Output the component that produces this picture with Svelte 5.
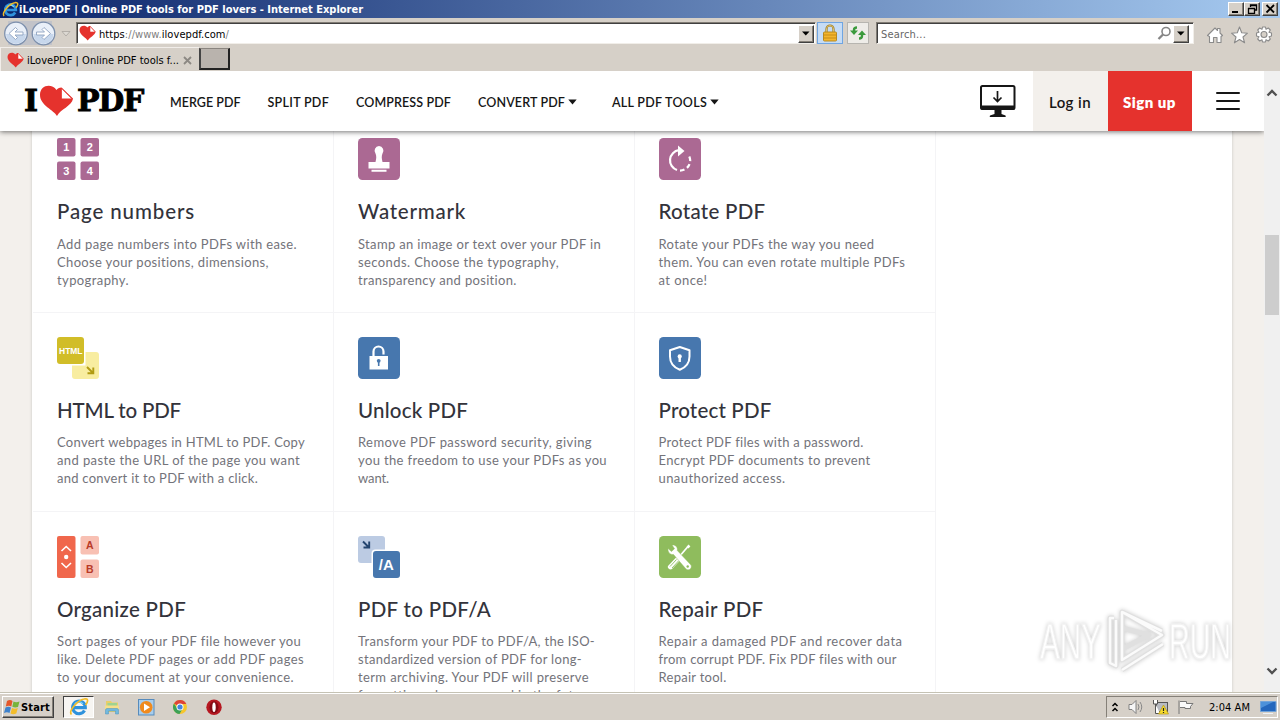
<script>
  // Tracks a run of text out to a set measure.
  function fit(node, width) {
    const natural = node.getBoundingClientRect().width;
    node.style.letterSpacing = (width - natural) / Math.max(1, node.textContent.length) + 'px';
  }

  const nav = [
    { label: 'MERGE PDF', w: 70.5 },
    { label: 'SPLIT PDF', w: 61.5 },
    { label: 'COMPRESS PDF', w: 95 },
    { label: 'CONVERT PDF', w: 87, menu: true },
    { label: 'ALL PDF TOOLS', w: 95, menu: true }
  ];

  const tools = [
    { icon: 'numbers', title: ['Page numbers', 138], lines: [['Add page numbers into PDFs with ease.', 240], ['Choose your positions, dimensions,', 212], ['typography.', 72]] },
    { icon: 'stamp', title: ['Watermark', 108], lines: [['Stamp an image or text over your PDF in', 243], ['seconds. Choose the typography,', 201], ['transparency and position.', 159]] },
    { icon: 'rotate', title: ['Rotate PDF', 107], lines: [['Rotate your PDFs the way you need', 216], ['them. You can even rotate multiple PDFs', 247], ['at once!', 49]] },
    { icon: 'html', title: ['HTML to PDF', 124], lines: [['Convert webpages in HTML to PDF. Copy', 248], ['and paste the URL of the page you want', 243], ['and convert it to PDF with a click.', 201]] },
    { icon: 'unlock', title: ['Unlock PDF', 110], lines: [['Remove PDF password security, giving', 234], ['you the freedom to use your PDFs as you', 249], ['want.', 31]] },
    { icon: 'protect', title: ['Protect PDF', 113], lines: [['Protect PDF files with a password.', 205], ['Encrypt PDF documents to prevent', 212], ['unauthorized access.', 127]] },
    { icon: 'organize', title: ['Organize PDF', 129], lines: [['Sort pages of your PDF file however you', 244], ['like. Delete PDF pages or add PDF pages', 247], ['to your document at your convenience.', 237]] },
    { icon: 'pdfa', title: ['PDF to PDF/A', 133], lines: [['Transform your PDF to PDF/A, the ISO-', 237], ['standardized version of PDF for long-', 224], ['term archiving. Your PDF will preserve', 231], ['formatting when accessed in the future.', 238]] },
    { icon: 'repair', title: ['Repair PDF', 105], lines: [['Repair a damaged PDF and recover data', 244], ['from corrupt PDF. Fix PDF files with our', 238], ['Repair tool.', 68]] }
  ];
</script>

{#snippet heart(w)}
  <svg width={w} height={w} viewBox="0 0 34 34">
    <path d="M17.500 31C14 25 1 20 1 10C1 1 12 -1 17 5C18 3 20 2 22 2L33 13C33 20 21 25 17.500 31Z" fill="#e5322d" />
    <path d="M22 2.500V14H32.500Z" fill="#fff" stroke="#e5322d" stroke-width="1.200" stroke-linejoin="round" />
  </svg>
{/snippet}

{#snippet ie(w)}
  <svg width={w} height={w} viewBox="0 0 20 20">
    <path d="M15.500 13.500A6.300 6.300 0 1 1 16.300 10.600H4.500" fill="none" stroke="#2f92dc" stroke-width="3.200" />
    <path d="M5.500 7.500A5 5 0 0 1 14 7" fill="none" stroke="#79d0f8" stroke-width="1.300" />
    <path d="M2.500 17.500C-1 14 9 3 15 2C20 1 19 5 16.500 8" fill="none" stroke="#f2bc28" stroke-width="1.700" />
  </svg>
{/snippet}

{#snippet caret()}
  <svg width="8" height="5" viewBox="0 0 8 5"><path d="M0 0.500H7.500L3.750 4.500Z" fill="#000" /></svg>
{/snippet}

<div class="screen">
  <div class="titlebar">
    {@render ie(17)}
    <span class="title-text"><span use:fit={344}>iLovePDF | Online PDF tools for PDF lovers - Internet Explorer</span></span>
    <div class="winbtns">
      <div class="btn3d"><svg width="11" height="10"><path d="M1 8H7" stroke="#000" stroke-width="2" /></svg></div>
      <div class="btn3d"><svg width="11" height="10"><path d="M3.500 3V1H9.500V6H7.500M3 1.500H10M1.500 4V9.500H7.500V4M1 4.500H8" fill="none" stroke="#000" stroke-width="1.300" /></svg></div>
      <div class="btn3d last"><svg width="11" height="10"><path d="M1.500 1L9 8.500M9 1L1.500 8.500" stroke="#000" stroke-width="1.800" /></svg></div>
    </div>
  </div>

  <div class="addressbar">
    <svg class="navbtns" width="74" height="29" viewBox="0 0 74 29">
      <path d="M8 3H52V27H8Z" fill="#c2c3c9" />
      <g stroke="#7d90ad" stroke-width="1.300" fill="#e9eff8"><circle cx="16" cy="15.500" r="11.300" /><circle cx="43.500" cy="15.500" r="11.300" /></g>
      <path d="M6 16a10 10 0 0 0 20 0zM33.500 16a10 10 0 0 0 20 0z" fill="#c7d7ec" />
      <g fill="#fff" stroke="#8ea3c1" stroke-width="0.900">
        <path d="M9 15.500L15.500 9.500L17.500 11.500L15 14H23V17H15L17.500 19.500L15.500 21.500Z" />
        <path d="M50.500 15.500L44 9.500L42 11.500L44.500 14H36.500V17H44.500L42 19.500L44 21.500Z" />
      </g>
      <path d="M62 13.500H70L66 18Z" fill="#ddd9d3" stroke="#aaa59f" stroke-width="0.800" />
    </svg>
    <div class="field url">
      {@render heart(17)}
      <span class="url-text"><span use:fit={130}>https<i>://www.</i>ilovepdf.com<i>/</i></span></span>
      <div class="btn3d drop">{@render caret()}</div>
    </div>
    <div class="lock">
      <svg width="14" height="18" viewBox="0 0 14 18">
        <path d="M3.500 9V5a3.500 3.500 0 0 1 7 0V9" fill="none" stroke="#9a7b27" stroke-width="2.200" />
        <path d="M3.500 9V5a3.500 3.500 0 0 1 7 0V9" fill="none" stroke="#efd27a" stroke-width="0.800" />
        <rect x="0.500" y="8" width="13" height="9" rx="1" fill="#f3b52d" stroke="#b88a20" /><path d="M1 11H13M1 14H13" stroke="#c78d18" />
      </svg>
    </div>
    <div class="refresh">
      <svg width="16" height="14" viewBox="0 0 16 14" fill="none" stroke="#3b9a3c" stroke-width="2.400">
        <path d="M7 1.500Q4 1.500 4 4V6" /><path d="M0 4.500H8L4 9Z" fill="#3b9a3c" stroke="none" />
        <path d="M9 12.500Q12 12.500 12 10V8" /><path d="M8 9H16L12 4.500Z" fill="#3b9a3c" stroke="none" />
      </svg>
    </div>
    <div class="field search">
      <span class="ph"><span use:fit={45}>Search...</span></span>
      <svg width="15" height="15" viewBox="0 0 15 15" fill="none" stroke="#858585"><circle cx="9" cy="5.500" r="4" stroke-width="1.600" /><path d="M6 8.500L1.500 13" stroke-width="2.300" /></svg>
      <div class="btn3d drop">{@render caret()}</div>
    </div>
    <svg class="tooltrio" width="68" height="20" viewBox="0 0 68 20" fill="#fff" stroke="#8b8b8b" stroke-width="1.100" stroke-linejoin="round">
      <path d="M1.500 10.500L9 3L11.500 5.500V3.500H14V8L16.500 10.500L15 11.500V17.500H11V12.500H7.500V17.500H3.500V11.500Z" />
      <path d="M33.500 2L35.700 7.800L41.500 8.200L37 12L38.600 17.800L33.500 14.500L28.400 17.800L30 12L25.500 8.200L31.300 7.800Z" />
      <path d="M56.500 2H59.500L60 4.300L62.300 3L64.300 5L63 7.300L65.500 8V11L63 11.700L64.300 14L62.300 16L60 14.700L59.500 17H56.500L56 14.700L53.700 16L51.700 14L53 11.700L50.500 11V8L53 7.300L51.700 5L53.700 3L56 4.300Z" />
      <circle cx="58" cy="9.500" r="3" fill="#d6d0c8" />
    </svg>
  </div>

  <div class="tabs">
    <div class="tab">
      {@render heart(17)}
      <span class="tab-text"><span use:fit={152}>iLovePDF | Online PDF tools f...</span></span>
      <svg width="9" height="9" viewBox="0 0 9 9"><path d="M1 1L8 8M8 1L1 8" stroke="#8c8883" stroke-width="1.800" /></svg>
    </div>
    <div class="newtab"></div>
  </div>

  <div class="viewport">
    <div class="page">
      <header>
        <div class="logo">
          <span class="slab i"><span use:fit={12}>I</span></span>
          <svg width="35" height="32" viewBox="0 0 35 32">
            <path d="M18 31C15 25 1 20.500 1 10C1 0 12.500 -2 17.500 5C18.500 3.500 20 2.500 22.500 2.500L34 13.500C33 21 21 24.500 18 31Z" fill="#e5322d" />
            <path d="M22.300 3V14H33.300Z" fill="#fff" stroke="#e5322d" stroke-linejoin="round" />
          </svg>
          <span class="slab pdf"><span use:fit={66}>PDF</span></span>
        </div>
        <nav>
          {#each nav as item}
            <a class:menu={item.menu}><span class="nl" style:width="{item.w}px"><span use:fit={item.w}>{item.label}</span></span>{#if item.menu}<svg width="9" height="6" viewBox="0 0 9 6"><path d="M0.300 0.500H8.700L4.500 5.500Z" fill="#161616" /></svg>{/if}</a>
          {/each}
        </nav>
        <svg class="monitor" width="36" height="33" viewBox="0 0 36 33">
          <rect x="1" y="1" width="33.500" height="23" rx="1.500" fill="#fff" stroke="#161616" stroke-width="2" />
          <path d="M0.500 20.500H35V23Q35 25 33 25H2.500Q0.500 25 0.500 23ZM14.500 25H21.500V29L25.500 30.500Q26.500 32 25 32H10.500Q9 32 10 30.500L14.500 29Z" fill="#161616" />
          <path d="M17.500 6V16M13.500 12.500L17.500 16.500L21.500 12.500" fill="none" stroke="#161616" stroke-width="1.700" />
        </svg>
        <div class="login"><span use:fit={42}>Log in</span></div>
        <div class="signup"><span use:fit={53}>Sign up</span></div>
        <div class="burger"><b></b><b></b><b></b></div>
      </header>

      <main>
        <div class="grid">
          {#each tools as t}
            <article>
              <svg class="icon" width="42" height="42" viewBox="0 0 42 42">
                {#if t.icon === 'numbers'}
                  {#each [[0, 0, '1'], [23.5, 0, '2'], [0, 23.5, '3'], [23.5, 23.5, '4']] as [x, y, n]}
                    <rect {x} {y} width="18.500" height="18.500" rx="2" fill="#ab6993" />
                    <text x={x + 9.2} y={y + 13} class="g" font-size="11">{n}</text>
                  {/each}
                {:else if t.icon === 'stamp'}
                  <rect width="42" height="42" rx="4.500" fill="#ab6993" />
                  <path d="M21 8A4.700 4.700 0 0 1 24.500 15.500Q23 18.500 24.500 24H31.500V30.500H10.500V24H17.500Q19 18.500 17.500 15.500A4.700 4.700 0 0 1 21 8ZM13.500 31.700H28.500V33.700H13.500Z" fill="#fff" />
                {:else if t.icon === 'rotate'}
                  <rect width="42" height="42" rx="4.500" fill="#ab6993" />
                  <g fill="none" stroke="#fff" stroke-width="2.200"><path d="M18 32A10.200 10.200 0 0 1 20 12.200" /><path d="M21 32.600A10.200 10.200 0 0 0 31.200 22.400A10.200 10.200 0 0 0 29 16.500" stroke-dasharray="4.600 3" /></g>
                  <path d="M19 7.500L25.500 13L19 18.500Z" fill="#fff" />
                {:else if t.icon === 'html'}
                  <rect x="15" y="15" width="27" height="27" rx="3" fill="#f8eda0" />
                  <path d="M0 0H28.500V28.500H15V15" fill="#fff" /><rect width="27" height="27" rx="3" fill="#d1bd28" />
                  <text x="13.800" y="16.500" class="g" font-size="8.500" textLength="23.500" lengthAdjust="spacingAndGlyphs">HTML</text>
                  <path d="M30 30L36 36M36.300 30.500V36.300H30.500" stroke="#b19b12" stroke-width="1.900" fill="none" />
                {:else if t.icon === 'unlock'}
                  <rect width="42" height="42" rx="4.500" fill="#4777ae" />
                  <path d="M15.500 20V14.500a5 5 0 0 1 10 0V17.500" fill="none" stroke="#fff" stroke-width="2.200" />
                  <rect x="11.500" y="19" width="18.500" height="13.500" fill="#fff" /><circle cx="20.700" cy="23.800" r="1.900" fill="#4777ae" /><path d="M20.700 24V29" stroke="#4777ae" stroke-width="1.600" />
                {:else if t.icon === 'protect'}
                  <rect width="42" height="42" rx="4.500" fill="#4777ae" />
                  <path d="M20.800 10L30.500 13.300V19.500C30.500 27 26.500 30.500 20.800 32.800C15 30.500 11 27 11 19.500V13.300Z" fill="none" stroke="#fff" stroke-width="2" stroke-linejoin="round" />
                  <circle cx="20.700" cy="19.400" r="2.100" fill="#fff" /><path d="M20.700 19V25" stroke="#fff" stroke-width="2.400" />
                {:else if t.icon === 'organize'}
                  <rect width="18.500" height="42" rx="2" fill="#f0674c" /><rect x="23.500" width="18.500" height="18.500" rx="2" fill="#f8c0b3" /><rect x="23.500" y="23.500" width="18.500" height="18.500" rx="2" fill="#f8c0b3" />
                  <path d="M4.500 15L9.200 10.500L14 15M4.500 27L9.200 31.500L14 27" fill="none" stroke="#fff" stroke-width="1.600" /><circle cx="9.200" cy="21" r="2.200" fill="#fff" />
                  <text x="32.800" y="13.200" class="g" font-size="10.500" fill="#b93a28">A</text><text x="32.800" y="36.500" class="g" font-size="10.500" fill="#b93a28">B</text>
                {:else if t.icon === 'pdfa'}
                  <rect width="27" height="27" rx="3" fill="#bccbe3" /><rect x="13.500" y="13.500" width="30" height="30" rx="4" fill="#fff" /><rect x="15" y="15" width="27" height="27" rx="3" fill="#4777ae" />
                  <path d="M5 5.500L11 11.500M11.200 5.500V11.500H5.500" stroke="#24456f" stroke-width="1.900" fill="none" />
                  <text x="28.300" y="34" class="g" font-size="15">/A</text>
                {:else}
                  <rect width="42" height="42" rx="4.500" fill="#8fbc5d" />
                  <path d="M29 10.500L20 21" stroke="#fff" stroke-width="1.700" /><path d="M28.500 11.500L30.500 9.500" stroke="#fff" stroke-width="2.500" />
                  <path d="M18.500 20L9 30C8 32 11 34.500 13 33L22 23.500Z" fill="#fff" /><path d="M17.500 23.500L11 30.500M19.500 25L13 32" stroke="#8fbc5d" stroke-width="0.900" />
                  <path d="M13 9C16.500 8.500 19 11.500 18.300 14.500L32 29C33.500 32 30 35.500 27 33L14.500 18.500C11 19 8.500 16 9 12.500L12.500 15.500L15.500 12.700Z" fill="#fff" stroke="#8fbc5d" stroke-width="0.500" /><circle cx="28.700" cy="30.500" r="1.200" fill="#8fbc5d" />
                {/if}
              </svg>
              <h3><span use:fit={t.title[1]}>{t.title[0]}</span></h3>
              <p>{#each t.lines as [text, w]}<span class="ln"><span use:fit={w}>{text}</span></span>{/each}</p>
            </article>
          {/each}
        </div>
      </main>

      <svg class="wm" width="200" height="76" viewBox="0 0 200 76">
        <g class="wmt" font-size="50">
          <text x="4" y="53" textLength="61" lengthAdjust="spacingAndGlyphs">ANY</text>
          <text x="133" y="53" textLength="62" lengthAdjust="spacingAndGlyphs">RUN</text>
        </g>
        <g class="wms" fill="none" stroke-linejoin="round">
          <path d="M86 6V54L126 29ZM86 6L126 25M78 12H74V57L80 60V14M86 22V43L113 29ZM86 64L127 38" stroke="#e0e0e0" stroke-width="5" />
          <path d="M86 6V54L126 29ZM86 6L126 25M78 12H74V57L80 60V14M86 64L127 38" stroke="#fbfbfb" stroke-width="2.500" />
        </g>
      </svg>
    </div>
    <div class="scroll">
      <svg width="12" height="8" viewBox="0 0 12 8"><path d="M1.500 6.500L6 2L10.500 6.500" fill="none" stroke="#505050" stroke-width="2.300" /></svg>
      <div class="thumb"></div>
      <svg class="down" width="12" height="8" viewBox="0 0 12 8"><path d="M1.500 1.500L6 6L10.500 1.500" fill="none" stroke="#505050" stroke-width="2.300" /></svg>
    </div>
  </div>

  <div class="taskbar">
    <div class="start">
      <svg width="17" height="17" viewBox="0 0 17 17">
        <path d="M3 2Q6 0 8.500 2L7.300 7.500Q5 6 1.800 7.500Z" fill="#e4572a" /><path d="M9.500 2.500Q12 4 15.500 2.500L14 8Q11 9 8.300 7.700Z" fill="#77b43a" />
        <path d="M1.500 8.500Q4.500 7 7 8.500L5.500 14Q3 12.500 0 14Z" fill="#3e82cc" /><path d="M8 9Q11 10.500 13.800 9L12.300 14.500Q9 16 6.500 14.500Z" fill="#f3bd2a" />
      </svg>
      <span use:fit={29}>Start</span>
    </div>
    <div class="task active">{@render ie(20)}</div>
    <div class="apps">
      <svg width="17" height="17" viewBox="0 0 17 17"><path d="M2 2H7L8 3.500H14V13H2Z" fill="#e8cf68" /><path d="M3.500 4H13V7H3.500Z" fill="#9ed391" /><path d="M1 6.500H15V11H1Z" fill="#f5df8c" /><path d="M1.500 15V11Q1.500 9.500 3 9.500H13Q14.500 9.500 14.500 11V15H11.500V12H4.500V15Z" fill="#72b9df" stroke="#4b92bd" stroke-width="0.500" /></svg>
      <svg width="17" height="17" viewBox="0 0 17 17"><rect x="0.500" y="0.500" width="15.500" height="15.500" fill="#a8cdec" stroke="#578bbc" /><circle cx="8.200" cy="8.200" r="6.300" fill="#f08a1d" /><path d="M6 4.500L12 8.200L6 12Z" fill="#fff" /></svg>
      <svg width="17" height="17" viewBox="0 0 17 17"><circle cx="8" cy="8" r="7" fill="#f6c62c" /><path d="M8 8L2 4.500A7 7 0 0 1 14.300 5H8Z" fill="#dd4438" /><path d="M1.900 4.500A7 7 0 0 0 7.500 15L10.500 10L8 8L5 9Z" fill="#3da157" /><circle cx="8" cy="8" r="3.500" fill="#fff" /><circle cx="8" cy="8" r="2.600" fill="#4385df" /></svg>
      <svg width="17" height="17" viewBox="0 0 17 17"><circle cx="8" cy="8.200" r="7.700" fill="#b61720" /><ellipse cx="8" cy="8.200" rx="4.500" ry="6" fill="#840b14" /><ellipse cx="8" cy="8.200" rx="1.700" ry="4.700" fill="#fff" /></svg>
    </div>
    <div class="tray">
      <svg width="9" height="12" viewBox="0 0 9 12"><path d="M1.500 5L4 2.500L6.500 5M1.500 10L4 7.500L6.500 10" fill="none" stroke="#000" stroke-width="1.500" /></svg>
      <svg width="17" height="16" viewBox="0 0 17 16"><path d="M1 5.500H4L8 1.500V14.500L4 10.500H1Z" fill="#f6f6f6" stroke="#777" stroke-width="0.900" /><path d="M10 5Q12 8 10 11M12 3Q15.500 8 12 13" stroke="#888" fill="none" /></svg>
      <svg width="17" height="16" viewBox="0 0 17 16"><rect x="4.500" y="3.500" width="11" height="9" fill="#b8bbc2" stroke="#555" /><path d="M1.500 1V5H5.500V1M3.500 5V14.500H8" fill="#fff" stroke="#555" /><path d="M11.500 6L16.500 15H6.500Z" fill="#f6db2c" stroke="#b79a14" stroke-width="0.700" /><path d="M11.500 9V12M11.500 13V14" stroke="#222" stroke-width="1.200" /></svg>
      <svg width="18" height="16" viewBox="0 0 18 16"><path d="M2 15V1.500M3 2.500H9.500V4.500H16L13.500 7.500V9.500H8V8.500H3" fill="#fafafa" stroke="#777" /></svg>
      <span class="clock"><span use:fit={41}>2:04 AM</span></span>
      <svg class="desk" width="17" height="15" viewBox="0 0 17 15"><path d="M0.500 1.500H16V11.500H0.500Z" fill="#2467bd" stroke="#73a4d9" /><path d="M1 2H13L1 8Z" fill="#4c91da" /><path d="M3 13.500H13" stroke="#eef2f6" /></svg>
    </div>
  </div>
</div>

<style>
  :global(body) { margin: 0; overflow: hidden; }
  .screen { width: 1280px; height: 720px; display: flex; flex-direction: column; overflow: hidden; background: #d6d0c8; font: 11px "DejaVu Sans Condensed", "DejaVu Sans", sans-serif; font-stretch: condensed; color: #000; white-space: nowrap; }
  svg { display: block; flex: none; }
  div { box-sizing: border-box; }
  .titlebar { height: 18px; flex: none; display: flex; align-items: center; padding: 0 2px; background: linear-gradient(90deg, #0a246a, #a6caf0); color: #fff; font-weight: bold; }
  .title-text { flex: 1; }
  .winbtns { display: flex; }
  .btn3d { background: #d6d0c8; border: 1px solid; border-color: #fff #404040 #404040 #fff; box-shadow: inset -1px -1px #858078; display: flex; align-items: center; justify-content: center; width: 16px; height: 14px; }
  .last { margin-left: 2px; }
  .addressbar { height: 29px; flex: none; display: flex; align-items: flex-start; }
  .field { height: 22px; margin-top: 4px; background: #fff; border: 1px solid; border-color: #807b74 #f1eee9 #f1eee9 #807b74; box-shadow: inset 1px 1px #404040; display: flex; align-items: center; }
  .url { width: 740px; margin-left: 2px; padding: 1px 1px 0 2px; }
  .url-text { flex: 1; margin-left: 3px; padding-top: 1px; }
  .url-text i { font-style: normal; color: #808080; }
  .drop { height: 18px; }
  .lock { width: 26px; height: 22px; margin: 4px 0 0 1px; border: 1px solid #6fa5e2; background: #c6dcf5; display: flex; align-items: center; justify-content: center; }
  .refresh { width: 22px; height: 22px; margin: 4px 0 0 4px; border: 1px solid #b7b5b0; background: #eeece8; display: flex; align-items: center; justify-content: center; }
  .search { width: 318px; margin-left: 7px; padding: 1px 4px 0; color: #666; }
  .ph { flex: 1; padding-top: 1px; }
  .search .drop { margin-left: 1px; }
  .tooltrio { margin: 7px 0 0 12px; }
  .tabs { height: 24px; flex: none; display: flex; align-items: flex-start; }
  .tab { width: 199px; height: 24px; display: flex; align-items: center; padding: 2px 5px 0 6px; border: 1px solid #f2eeea; border-width: 1px 0 0 1px; }
  .tab-text { width: 156px; margin-left: 3px; }
  .newtab { width: 31px; height: 22px; margin-top: 1px; background: #b9b3ad; border: 1px solid; border-width: 1px 2px 2px 2px; border-color: #8a857f #222 #222 #444; }
  .viewport { height: 621px; flex: none; display: flex; overflow: hidden; background: #fff; }
  .page { width: 1264px; height: 621px; position: relative; background: #f3f0ec; overflow: hidden; font-family: Lato, sans-serif; font-stretch: normal; }
  header { height: 60px; background: #fff; display: flex; align-items: center; position: relative; z-index: 2; box-shadow: 0 1px 5px rgba(0, 0, 0, .55); color: #161616; }
  .logo { width: 146px; padding-left: 24px; display: flex; align-items: center; flex: none; box-sizing: border-box; }
  .logo svg { margin-left: 3px; }
  .slab { display: block; font: bold 30px/36px "DejaVu Serif", serif; font-stretch: normal; color: #000; -webkit-text-stroke: .9px #000; }
  .slab.i { width: 12px; }
  .slab.pdf { width: 67px; margin-left: 3px; }
  nav { display: flex; width: 810px; padding: 2px 0 0 24px; gap: 27px; font-size: 12.5px; font-weight: 600; box-sizing: border-box; }
  nav a { display: flex; align-items: center; gap: 3px; }
  nav a.menu + a.menu { margin-left: 8px; }
  .nl { display: block; }
  .monitor { margin: 0 0 0 23.5px; }
  .login, .signup { height: 60px; display: flex; align-items: center; justify-content: center; font-size: 15px; font-weight: 600; padding-top: 1px; }
  .login { width: 75px; background: #f3f0ec; margin-left: 17px; }
  .signup { width: 84px; background: #e5322d; color: #fff; font-weight: 800; }
  .burger { margin-left: 24px; display: flex; flex-direction: column; gap: 6px; }
  .burger b { width: 24px; height: 2px; border-radius: 1px; background: #161616; }
  main { margin: -18px 32px 0; height: 660px; background: #fff; box-shadow: 0 0 3px rgba(0, 0, 0, .18); }
  .grid { display: grid; grid-template-columns: 301px 300.500px 301px; grid-auto-rows: 199px; }
  article { box-sizing: border-box; padding: 25px 0 0 25px; box-shadow: 1px 1px 0 #f4f4f6; }
  h3 { margin: 19px 0 0; font-size: 20.5px; line-height: 24px; font-weight: 500; color: #33333b; }
  p { margin: 12px 0 0; font-size: 13px; line-height: 18px; color: #73737a; }
  article:nth-child(n + 4) p { margin-top: 11px; }
  .ln { display: block; }
  .g { font-family: "Liberation Sans", sans-serif; font-weight: bold; text-anchor: middle; }
  .g:not([fill]) { fill: #fff; }
  .wm { position: absolute; left: 1036px; top: 535px; z-index: 3; filter: drop-shadow(0 0 2px rgba(0, 0, 0, .2)); }
  .wmt { font-family: "Liberation Sans", sans-serif; fill: #fff; stroke: #f2f2f2; stroke-width: 1.5; }
  .scroll { width: 16px; background: #f0f0f0; display: flex; flex-direction: column; align-items: center; padding-top: 18px; }
  .thumb { width: 14px; height: 80px; margin-top: 138px; background: #cdcdcd; }
  .down { margin: auto 0 17px; }
  .taskbar { height: 28px; flex: none; background: #d6d0c8; border-top: 1px solid #c5c2b4; box-shadow: inset 0 1px #fff; display: flex; align-items: center; padding: 1px 2px 0; }
  .start { width: 52px; height: 22px; border: 1px solid; border-color: #fff #404040 #404040 #fff; box-shadow: inset -1px -1px #858078; display: flex; align-items: center; padding-left: 1px; font-weight: bold; }
  .task { width: 31px; height: 22px; margin-left: 9px; border: 1px solid; border-color: #404040 #fff #fff #404040; background: #f7f5f2; display: flex; align-items: center; justify-content: center; }
  .apps { display: flex; gap: 17px; margin-left: 10px; }
  .tray { margin-left: auto; width: 172px; height: 22px; border: 1px solid; border-color: #858078 #fff #fff #858078; display: flex; align-items: center; padding-left: 4px; }
  .tray svg + svg { margin-left: 8px; }
  .tray svg:nth-of-type(3) { margin-left: 7px; }
  .clock { width: 43px; margin-left: 14px; }
  .tray .desk { margin-left: 9px; }
</style>
